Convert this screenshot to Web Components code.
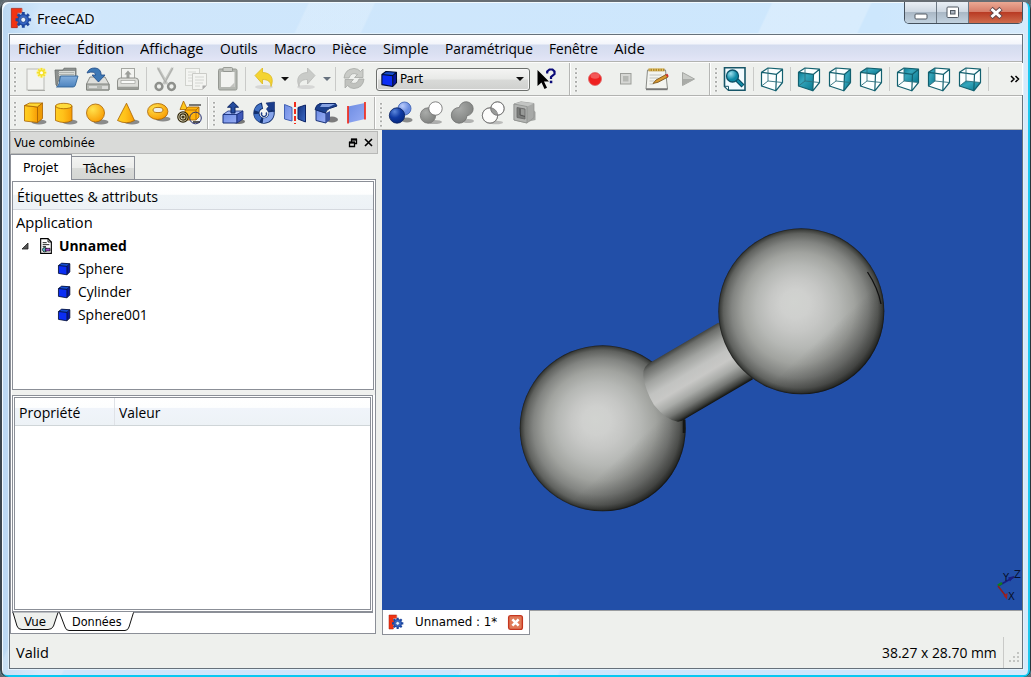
<!DOCTYPE html>
<html lang="fr"><head><meta charset="utf-8"><title>FreeCAD</title>
<style>
html,body{margin:0;padding:0;width:1031px;height:677px;overflow:hidden;background:#5d6a70}
body{font-family:"Open Sans","Noto Sans",sans-serif;font-size:14.5px;color:#000}
</style></head><body>
<cad-window></cad-window>
<script>
const base='<style>*{box-sizing:border-box}:host{box-sizing:border-box}svg{display:block;overflow:visible}</style>';
function define(name,html,after){
  const t=document.createElement('template');t.innerHTML=base+html;
  customElements.define(name,class extends HTMLElement{
    connectedCallback(){
      if(this.shadowRoot)return;
      this.attachShadow({mode:'open'}).append(t.content.cloneNode(true));
      if(after)after(this,this.shadowRoot);
    }
  });
}

/* Text set to a known advance width */
define('fit-text','<style>:host{display:block;white-space:pre;line-height:20px;flex:none}span{display:inline-block;transform-origin:0 50%}</style><span><slot></slot></span>',(h,r)=>{
  const s=r.querySelector('span'),w=+h.getAttribute('w');
  h.style.width=w+'px';
  const m=s.offsetWidth;
  if(m)s.style.transform='scaleX('+(w/m).toFixed(4)+')';
});

const O='stroke="#a86200" stroke-width=".8" stroke-linejoin="round"';
const shadow='<ellipse cx="17" cy="21" rx="7.5" ry="2.6" fill="#555" opacity=".65"/>';
const cubeLines='<path d="M1.5 5.300 8 1 22.500 2.200 16.500 7.300zM1.500 5.300V19L15.800 23.800 16.500 7.300M15.800 23.800 22.500 15.500V2.200" fill="none" stroke="#12606f" stroke-width="1.2" stroke-linejoin="round"/><path d="M8 1V14L1.500 19M8 14 22.500 15.500" fill="none" stroke="#2c6f7d" stroke-width=".9"/>';
const cube=p=>'<path d="M1.5 5.300 8 1 22.500 2.200V15.5L15.800 23.800 1.5 19z" fill="#fbffff"/>'+(p?'<path d="'+p+'" fill="url(#teal)"/>':'')+cubeLines;
const icons={
 'new':'<rect x="4" y="2" width="17" height="21" fill="#f2f3f0" stroke="#b9bab6"/><path d="M5 23.5h17" stroke="#8d8f8a" opacity=".6"/><circle cx="18.5" cy="5.7" r="5.2" fill="#fff59a" opacity=".7"/><path d="M18.500 1v9.400M13.800 5.700h9.400M15.200 2.400l6.600 6.600M21.800 2.400l-6.600 6.600" stroke="#f4e02c" stroke-width="1.700"/><circle cx="18.500" cy="5.700" r="3" fill="#f4e02c"/><circle cx="18.5" cy="5.7" r="1.5" fill="#fff"/>',
 open:'<path d="M1 3h8l1-1.8h12V14H4l-1 5-1-1z" fill="#8d918f" stroke="#666b68" stroke-width=".8"/><path d="M5 4h16v5H5z" fill="#d8dbd8"/><path d="M4 5.5h16M4 7.5h16" stroke="#a6aaa6" stroke-width=".8"/><path d="M6.5 9H24l-2.6 9q-.5 2-2.4 2H2.5q2-1 2.4-3z" fill="url(#fold)" stroke="#2f6396" stroke-width=".9"/>',
 save:'<path d="M5 10h15l4 7v6H1.5v-6z" fill="#dedfdb" stroke="#8b8d88"/><path d="M1.5 17H24v6H1.5z" fill="#b4b7b2" stroke="#80837e"/><path d="M4 20h8M18 19v3M20 19v3M22 19v3" stroke="#fff"/><path d="M2 6Q4 .8 10 1q6 .4 6.2 7H20l-6.5 7L7 8h3.8Q10 3.500 2 6z" fill="#3d78b5" stroke="#204a87" stroke-width=".8"/>',
 print:'<rect x="5.500" y="1.500" width="13" height="11" fill="#f3f4f1" stroke="#a5a7a2"/><path d="M12 3.500l3.500 4H13.500V11h-3V7.500H8.500z" fill="#9c9e9a"/><path d="M1.500 14q0-3 3-3h15q3 0 3 3v8.500h-21z" fill="#dcddd9" stroke="#8f918c"/><rect x="5" y="13.500" width="14" height="3" fill="#f9faf8" stroke="#a1a39e" stroke-width=".7"/><path d="M2 21h20" stroke="#9a9c97" stroke-width="2.500"/>',
 cut:'<path d="M5 1l9 16M19.500 1l-9 16" stroke="#c3c5c1" stroke-width="2.600"/><path d="M4.500.500l8 15M20 .500l-8 15" stroke="#a2a4a0" stroke-width=".7"/><circle cx="6" cy="19.500" r="3.400" fill="none" stroke="#8e908c" stroke-width="2.500"/><circle cx="18.500" cy="19.500" r="3.400" fill="none" stroke="#8e908c" stroke-width="2.500"/>',
 copy:'<rect x="1.500" y="1.500" width="14" height="17" fill="#f4f5f2" stroke="#d0d2cd"/><path d="M4 5h8M4 8h8M4 11h4M4 14h4" stroke="#d6d8d4"/><path d="M8.500 6.500h14v12l-4 4h-10z" fill="#f3f4f1" stroke="#cacbc7"/><path d="M11 10h9M11 13h9M11 16h8M11 19h5" stroke="#d4d6d2"/><path d="M18.500 22.500v-4h4z" fill="#aaa"/>',
 paste:'<rect x="3.500" y="2" width="18.500" height="21" rx="1.500" fill="#b4b7b1" stroke="#959892"/><path d="M6 5h13.500v15H6z" fill="#f2f3f0"/><path d="M15 20l4.500-4.500V20z" fill="#c2c3bf"/><rect x="8" y=".5" width="9.500" height="4" rx="1" fill="#c9cbc6" stroke="#888b85" stroke-width=".8"/>',
 undo:'<ellipse cx="12" cy="20" rx="9" ry="2" fill="#ccc" opacity=".7"/><path d="M3 8.500 10.500 1v4.500c8 .2 12 5.500 8.500 14-.3-5-3-7-8.500-7V17z" fill="#f4d431" stroke="#dcb81c" stroke-width=".8"/>',
 redo:'<ellipse cx="12" cy="20" rx="9" ry="2" fill="#ccc" opacity=".7"/><path d="M21 8.500 13.500 1v4.500c-8 .2-12 5.500-8.500 14 .3-5 3-7 8.500-7V17z" fill="#c9cbc8" stroke="#b7b9b6" stroke-width=".8"/>',
 refresh:'<path d="M2 11Q3 2 12 1.500q4 0 6.500 3L21 2v8.500h-8.500l3-3Q9 4.500 7 11z" fill="#c9cbc7" stroke="#a6a8a4" stroke-width=".8"/><path d="M22 12q-1 9-10 9.500-4 0-6.500-3L3 21v-8.500h8.500l-3 3Q15 18.500 17 12z" fill="#c0c2be" stroke="#a6a8a4" stroke-width=".8"/>',
 what:'<path d="M3.500 3v16l4-3.500 3 6.500 2.500-1.200-3-6.300h5z" fill="#000"/><path d="M13.200 6.500V4.500L15.500 2.500h3l2 2V7L17 10v2" fill="none" stroke="#0a0a78" stroke-width="2.200"/><rect x="15.800" y="13.700" width="2.500" height="2.500" fill="#0a0a78"/>',
 record:'<circle cx="12" cy="12" r="6.500" fill="#ef2020" stroke="#dd6a6a" stroke-width=".8"/><ellipse cx="12" cy="9" rx="4.500" ry="2.800" fill="#fff" opacity=".25"/>',
 stop:'<rect x="6.500" y="6.500" width="10.500" height="10.500" fill="#d6d7d4" stroke="#9c9e9a"/><rect x="9" y="9" width="5.500" height="5.500" fill="#b5b7b3"/>',
 edit:'<path d="M2.500 3h18L22.500 22H1z" fill="#f3f4f0" stroke="#8b8d88"/><path d="M1 22.300h21.500" stroke="#777" stroke-width="1.800"/><path d="M3.500 1.500h16v2.800h-16z" fill="#b48a28"/><path d="M5 1v3M7.500 1v3M10 1v3M12.500 1v3M15 1v3M17.500 1v3" stroke="#ead080" stroke-width=".8"/><path d="M4.500 8h12M4.500 11h9M4.500 14h5M4.500 17h4" stroke="#c2c4c0"/><path d="M8 16.500l3-3.500L21 7.500l2 2.500-10 5.300z" fill="#d89830" stroke="#6d4a12" stroke-width=".8"/><path d="M20.500 7.800l2 2.500 1.200-1-1.200-2.500z" fill="#d03030"/>',
 play:'<path d="M6.500 5.500 18.500 12 6.500 18.500z" fill="#c9cbc7" stroke="#a5a7a3"/><path d="M7 12h11L7 18z" fill="#a9aba7"/>',
 fit:'<path d="M1.500.800H22v22.500H5.500l-4-4z" fill="#f2fbff" stroke="#175668" stroke-width="1.600"/><path d="M1.500 19.300h4v4z" fill="#fff" stroke="#175668"/><path d="M14 13l6 6" stroke="#064c62" stroke-width="4.200"/><path d="M14 13l5.500 5.500" stroke="#128da8" stroke-width="2"/><circle cx="9.500" cy="9" r="6" fill="url(#lens)" stroke="#0b5268" stroke-width="1.300"/>',
 axo:cube(''),front:cube('M1.500 5.300 16.500 7.300 15.800 23.800 1.500 19z'),right:cube('M16.500 7.300 22.500 2.200V15.500L15.800 23.800z'),top:cube('M1.500 5.300 8 1 22.500 2.200 16.500 7.300z'),
 rear:cube('M8 1 22.500 2.200V15.500L8 14z'),left:cube('M1.500 5.300 8 1V14L1.500 19z'),bottom:cube('M1.500 19 8 14 22.500 15.500 15.800 23.800z'),
 box:shadow+'<path d="M2.500 4.500 15.500 6V21.500L2.500 20z" fill="url(#gold)" '+O+'/><path d="M2.500 4.500 7.500 2H20.500L15.500 6z" fill="#ffd733" '+O+'/><path d="M15.500 6 20.500 2V17.500L15.500 21.500z" fill="#ee9b05" '+O+'/>',
 cylinder:shadow+'<path d="M2.500 5v14.500q9 4 16.500 0V5z" fill="url(#gold)" '+O+'/><ellipse cx="10.750" cy="5" rx="8.250" ry="2.700" fill="#ffdc3c" '+O+'/>',
 sphere:shadow+'<circle cx="11.500" cy="12" r="9" fill="url(#goldr)" '+O+'/>',
 cone:shadow+'<path d="M11.500 2.200 2.500 19.500q9 4.500 17 0z" fill="url(#gold)" '+O+'/>',
 torus:shadow.replace('cy="21"','cy="18"')+'<path fill-rule="evenodd" d="M1.500 10.500a10.200 8 0 1 0 20.400 0a10.200 8 0 1 0-20.400 0zM7 9a5 2.600 0 1 1 10 0a5 2.600 0 1 1-10 0z" fill="url(#goldr)" '+O+'/>',
 prims:'<path d="M6.500 0 3 8.500h7.500z" fill="#ffc71a" '+O+'/><path d="M8 9l3-3h11v10l-3 3H8z" fill="#ffb40c" '+O+'/><path d="M8 9h11v10M19 9l3-3" fill="none" '+O+'/><path d="M12 4h12" stroke="#000"/><g fill="none" stroke="#2d2408" stroke-width="1.200"><circle cx="6" cy="16" r="5.200" fill="#eadfb8aa"/><circle cx="6" cy="16" r="3.100"/><circle cx="6" cy="16" r="1"/></g><path d="M16 21h7" stroke="#555" stroke-width="2"/><circle cx="18.500" cy="17" r="5.800" fill="none" stroke="#29306f" stroke-width="1"/>',
 extrude:'<ellipse cx="18" cy="20.500" rx="6" ry="2.500" fill="#444" opacity=".7"/><path d="M2 13.500h14v8.500H2z" fill="url(#blue)" stroke="#152c78"/><path d="M2 13.500 7 10h15l-6 3.500z" fill="#9fb4f4" stroke="#152c78" stroke-width=".8"/><path d="M16 13.500l6-3.500v8l-6 4z" fill="#3f58b8" stroke="#152c78" stroke-width=".8"/><path d="M12 .8 17.500 6.200H14V12h-4V6.200H6.500z" fill="#244b9d" stroke="#0d2562"/>',
 revolve:'<path d="M10.500 4.600A7.600 7.600 0 1 0 19 9" fill="none" stroke="#12306f" stroke-width="6.200"/><path d="M9.500 4.900A7.600 7.600 0 0 0 4.500 10M4.300 13A7.600 7.600 0 0 0 8.500 18.900" fill="none" stroke="#3f6fc4" stroke-width="4.600"/><path d="M11 19.600A7.600 7.600 0 0 0 19.400 11" fill="none" stroke="#86a4ea" stroke-width="4.600"/><path d="M14 2 22.500 1V10.500L19.500 9 16 11 14.500 8 16.500 5.500z" fill="#1a3c8b" stroke="#0f2968" stroke-width=".6"/><circle cx="12" cy="12.500" r="4" fill="#f3f5f3"/><path d="M10 11.500a2.500 2.500 0 1 0 4 0" fill="none" stroke="#1d3d86" stroke-width="1.300"/>',
 mirror:'<path d="M1.500 3.500 9 6.500V20L1.500 18z" fill="url(#blue)" stroke="#4161b3"/><path d="M15 6.500 22.500 4V21L15 18z" fill="url(#dblue)" stroke="#0c2467"/><path d="M12 1v22" stroke="#f12c1c" stroke-width="2" stroke-dasharray="5 2"/>',
 fillet:'<ellipse cx="18" cy="18.500" rx="6" ry="3" fill="#555" opacity=".75"/><path d="M2 9v10.500L12 22V12z" fill="url(#blue)" stroke="#183379"/><path d="M12 12v10l4-3v-9z" fill="#38509e"/><path d="M1 8.500Q2 3.500 6 2.500H21.500L23 5 15.500 7.500Q12 9 11.500 12z" fill="#1b408d" stroke="#10296a"/><path d="M8 3h13l-6 3H6z" fill="#86a3e3"/>',
 ruled:'<path d="M3 5.500 20 2V18L3 22z" fill="url(#blue)"/><path d="M3 5v17.500M20 1v17.500" stroke="#f12c1c" stroke-width="1.700"/>',
 bool:'<ellipse cx="19" cy="19" rx="5.500" ry="2.500" fill="#555" opacity=".65"/><circle cx="16.500" cy="7.500" r="6.500" fill="url(#lb)" stroke="#345ab0" stroke-width=".8"/><circle cx="9" cy="14.500" r="7.700" fill="url(#db)" stroke="#07205e" stroke-width=".8"/>',
 diff:'<ellipse cx="15" cy="21" rx="8" ry="2" fill="#888" opacity=".65"/><circle cx="9" cy="14.500" r="7.700" fill="url(#gr)" stroke="#777" stroke-width=".8"/><circle cx="16.500" cy="7.500" r="6.700" fill="#fff" stroke="#666" stroke-width=".8"/>',
 union:'<ellipse cx="18" cy="20" rx="6" ry="2" fill="#888" opacity=".6"/><path d="M1.300 14a7.700 7.700 0 0 1 8-7.500A7 7 0 1 1 17 14.700 7.800 7.800 0 1 1 1.300 14z" fill="url(#gr)" stroke="#6e706e" stroke-width=".8"/>',
 common:'<ellipse cx="15" cy="21.500" rx="7" ry="1.700" fill="#999" opacity=".6"/><circle cx="9" cy="14.500" r="7.700" fill="#fcfcfb" stroke="#777" stroke-width=".8"/><circle cx="16.500" cy="7.500" r="6.700" fill="#fff" stroke="#777" stroke-width=".8"/><path d="M9 6.800a7.700 7.700 0 0 1 7.600 7.400A6.700 6.700 0 0 1 9.800 7z" fill="#999b99"/><g fill="none" stroke="#777" stroke-width=".8"><circle cx="9" cy="14.500" r="7.700"/><circle cx="16.500" cy="7.500" r="6.700"/></g>',
 section:'<path d="M15 21l8.500-2v-8l-5-5z" fill="#858785" opacity=".7"/><path d="M2 3 9 .800 22 2.500v14L15 22 2 19z" fill="#a7a9a7" stroke="#8f918f" stroke-width=".7"/><path d="M2 3 15 5.500 22 2.500 9 .800z" fill="#c3c5c3"/><path d="M2 3 15 5.500V22L2 19z" fill="#b2b4b2" stroke="#8a8c8a" stroke-width=".7"/><path d="M5 6.500l8 1.500v10L5 16.500z" fill="#7b7d7b" stroke="#666" stroke-width=".8"/><path d="M8 7.500V14l5 1.500" fill="none" stroke="#555"/><path d="M9 8l3.500.500v6L9 13.500z" fill="#979997"/>',
 part:'<path d="M2.500 6 8 2 22 3 17 7.500V22L2.500 19.500z" fill="#0b2ef5"/><path d="M2.500 6 8 2 22 3 17 7.500z" fill="#174ed0"/><path d="M17 7.500 22 3V17L17 22z" fill="#0716a0"/><path d="M2.500 6 8 2 22 3 17 7.500zM2.500 6V19.500L17 22V7.500M17 22l5-5V3" fill="none" stroke="#000c30" stroke-width="1.400" stroke-linejoin="round"/>',
 logo:'<path d="M1.500 1.500H13V6.500H8V10h5v4H8v8.500H1.500z" fill="#f23312" stroke="#a91e10" stroke-width=".8"/><path d="M13 1.500v5H8" fill="none" stroke="#ffb29b" stroke-width=".5"/><g transform="translate(14.500 14)"><circle r="6" fill="#2c58b4" stroke="#12316f" stroke-width=".7"/><path d="M0-8.500V8.500M-8.500 0H8.500M-6-6 6 6M6-6-6 6" stroke="#1c469f" stroke-width="3.200"/><circle r="5" fill="#3766c4"/><circle r="2.700" fill="#e8f2fb" stroke="#15367b" stroke-width=".7"/></g>',
 doc:'<path d="M4 1h11l5 5v17H4z" fill="#fff" stroke="#000" stroke-width="1.700"/><path d="M15 1v5h5M7 7h6M7 10h10M7 13h5" fill="none" stroke="#000" stroke-width="1.300"/><circle cx="10" cy="17.500" r="3.300" fill="#55b8c4" stroke="#000"/><path d="M11 15.500h7v4h-7z" fill="#a94bd0" stroke="#000"/>',
 closetab:'<rect x="1" y="1" width="22" height="22" rx="3" fill="#e07a58" stroke="#c5361f" stroke-width="2.200"/><path d="M7 7l10 10M17 7 7 17" stroke="#fff" stroke-width="4.200"/>'
};
const defs='<defs><linearGradient id="teal" x2="1" y2="1"><stop stop-color="#0b7d96"/><stop offset=".35" stop-color="#35a5bb"/><stop offset="1" stop-color="#07788f"/></linearGradient><linearGradient id="fold" x2="0" y2="1"><stop stop-color="#85b0de"/><stop offset="1" stop-color="#4c83be"/></linearGradient><radialGradient id="lens" cx=".35" cy=".3"><stop stop-color="#9be0ee"/><stop offset="1" stop-color="#0d89a5"/></radialGradient><linearGradient id="gold"><stop stop-color="#ffcf22"/><stop offset=".45" stop-color="#ffc21a"/><stop offset="1" stop-color="#f79c04"/></linearGradient><radialGradient id="goldr" cx=".35" cy=".3" r=".75"><stop stop-color="#ffe24d"/><stop offset="1" stop-color="#f89c03"/></radialGradient><linearGradient id="blue" x2="1" y2="1"><stop stop-color="#6d8ce2"/><stop offset="1" stop-color="#98adf5"/></linearGradient><linearGradient id="dblue" x2="1" y2="1"><stop stop-color="#12327e"/><stop offset="1" stop-color="#3d6bc6"/></linearGradient><radialGradient id="lb" cx=".35" cy=".3"><stop stop-color="#b9cbfb"/><stop offset="1" stop-color="#6a8ce0"/></radialGradient><radialGradient id="db" cx=".35" cy=".25" r=".8"><stop stop-color="#5b87dc"/><stop offset=".5" stop-color="#103ba4"/><stop offset="1" stop-color="#06277c"/></radialGradient><radialGradient id="gr" cx=".35" cy=".3" r=".8"><stop stop-color="#a9aba9"/><stop offset="1" stop-color="#7b7d7b"/></radialGradient></defs>';
define('cad-icon','<style>:host{display:block;flex:none}</style><svg viewBox="0 0 24 24"></svg>',(h,r)=>{
  const v=r.querySelector('svg'),s=h.getAttribute('size')||24;
  v.setAttribute('width',s);v.setAttribute('height',s);v.innerHTML=defs+icons[h.getAttribute('name')];
});
define('tool-button','<style>:host{display:flex;width:31px;height:32px;align-items:center;justify-content:center;flex:none}</style><cad-icon></cad-icon>',(h,r)=>{
  const n=document.createElement('cad-icon');n.setAttribute('name',h.getAttribute('icon'));r.querySelector('cad-icon').replaceWith(n);
});
define('tool-sep','<style>:host{display:block;flex:none;width:6px;height:24px;background:linear-gradient(#c9cac8,#c9cac8) 3px 0/1px 100% no-repeat}</style>');
define('tool-grip','<style>:host{display:block;flex:none;width:8px;height:26px;background:radial-gradient(circle at 2px 2px,#aaaca9 1.1px,#fff 1.2px,transparent 1.9px) 3px 1px/5px 4.4px repeat-y}</style>');
define('tool-arrow','<style>:host{display:flex;flex:none;width:11px;justify-content:center}i{border:4px solid transparent;border-top-color:var(--c,#111);border-bottom:0}</style><i></i>');
define('tool-group','<style>:host{display:flex;align-items:center;height:100%;flex:none;border-right:1px solid #b5b6b4;box-shadow:1px 0 #fff;overflow:hidden}</style><slot></slot>');
define('tool-row','<style>:host{display:flex;height:34px;background:#eef0ed;border-bottom:1px solid #b2b3b1;border-top:1px solid #fcfcfb;flex:none}</style><slot></slot>');
define('work-combo','<style>:host{display:flex;align-items:center;width:154px;height:23px;margin-left:7px;border:1.500px solid #6d706d;border-radius:3px;background:linear-gradient(#f4f4f3,#e8e9e7 48%,#d9dad8 52%,#cfd0ce);box-shadow:inset 0 0 0 1px #f7f7f7;padding:0 4px 0 3px;font:12.5px "DejaVu Sans Condensed","DejaVu Sans",sans-serif}fit-text{margin-left:2px;flex:none}tool-arrow{margin-left:auto}</style><cad-icon name="part" size="18"></cad-icon><fit-text w="23">Part</fit-text><tool-arrow></tool-arrow>');

define('title-bar',`<style>
:host{display:flex;height:34px;align-items:flex-start;flex:none}
cad-icon{margin:7px 0 0 1px}
fit-text{margin:9px 0 0 5px;text-shadow:0 0 8px #fff,0 0 12px #fff}
.b{display:flex;margin-left:auto;height:22px;margin-top:2px;border:1px solid #45515d;border-top:0;border-radius:0 0 5px 5px;overflow:hidden;width:119px}
.b i{display:flex;align-items:center;justify-content:center;width:32px;border-right:1px solid #6c7884;background:linear-gradient(#e9eff5,#cdd7e1 48%,#aab8c6 50%,#c2d2df)}
.b i:last-child{flex:1;border:0;background:linear-gradient(#eba994,#d57b67 48%,#b93b24 50%,#cf6c4d)}
.b i:first-child{padding-top:3px}
</style><cad-icon name="logo" size="22"></cad-icon><fit-text w="58">FreeCAD</fit-text>
<div class="b"><i><svg width="14" height="12"><rect x="1" y="6" width="12" height="5" rx="1" fill="#fff" stroke="#505863"/></svg></i><i><svg width="14" height="13"><rect x="1" y="1" width="11.500" height="10.500" rx="1" fill="#fff" stroke="#505863"/><rect x="4.500" y="4.500" width="4.500" height="3.500" fill="#aab4c0" stroke="#505863"/></svg></i><i><svg width="14" height="12"><path d="M2 1.500 12 10.500M12 1.500 2 10.500" stroke="#63474a" stroke-width="4.800"/><path d="M2.500 2 11.500 10M11.500 2 2.500 10" stroke="#fff" stroke-width="3"/></svg></i></div>`);

define('menu-bar',`<style>:host{display:flex;gap:16px;height:27px;padding:4px 0 0 8px;flex:none;background:linear-gradient(#fff,#f3f5fb 9px,#d4dcef 10px,#dbe0f2 19px,#e2e5f6 25px);border-bottom:1px solid #b2b3b1}</style>
<fit-text w="43">Fichier</fit-text><fit-text w="47">Édition</fit-text><fit-text w="64">Affichage</fit-text><fit-text w="38">Outils</fit-text><fit-text w="42">Macro</fit-text><fit-text w="35">Pièce</fit-text><fit-text w="46">Simple</fit-text><fit-text w="88">Paramétrique</fit-text><fit-text w="49">Fenêtre</fit-text><fit-text w="31">Aide</fit-text>`);

const btn=a=>a.split(' ').map(n=>n==='|'?'<tool-sep></tool-sep>':'<tool-button icon="'+n+'"></tool-button>').join('');
define('main-tools',`<style>:host{display:block}.more{margin:0 0 0 auto;width:10px}svg{margin:0}.g3{flex:1;border-right:0;padding-right:2px}</style>
<tool-row><tool-grip style="width:9px;margin-top:3px"></tool-grip><tool-group style="width:551px">${btn('new open save print | cut copy paste | undo')}<tool-arrow></tool-arrow><tool-button icon="redo"></tool-button><tool-arrow style="--c:#66717e"></tool-arrow>${btn('| refresh')}<work-combo></work-combo>${btn('what')}</tool-group>
<tool-group style="width:140px;padding-left:1px"><tool-grip></tool-grip>${btn('record stop edit play')}</tool-group>
<tool-group class="g3" style="padding-left:1px"><tool-grip></tool-grip>${btn('fit | axo | front right top | rear left bottom |')}<svg class="more" width="10" height="9" viewBox="0 0 10 9"><path d="M1 1l3 3-3 3M5.500 1l3 3-3 3" fill="none" stroke="#000" stroke-width="1.500"/></svg></tool-group></tool-row>
<tool-row><tool-group style="width:198px"><tool-grip></tool-grip>${btn('box cylinder sphere cone torus prims')}</tool-group><tool-group style="width:167px"><tool-grip style="margin-left:1px"></tool-grip>${btn('extrude revolve mirror fillet ruled')}</tool-group><tool-grip style="margin:4px 0 0 1px"></tool-grip>${btn('bool diff union common section')}</tool-row>`);

define('tree-row',`<style>:host{display:flex;height:23px;align-items:center}</style><slot></slot>`);
define('tree-view',`<style>
:host{display:block;height:209px;border:1px solid #8b8f97;background:#fff;flex:none;margin:0 1px 0 1px}
.h{height:28px;background:linear-gradient(#fff,#fdfefe 45%,#eff4f7 50%,#edf2f6);border-bottom:1px solid #d5d9df;padding:5px 0 0 4px}
.l{padding:1px 0 0 3px}.d{padding-left:41px}.d cad-icon{margin-right:7px}.n{padding-left:5px}.n svg{margin-right:9px}
</style><div class="h"><fit-text w="141">Étiquettes &amp; attributs</fit-text></div>
<div class="l"><tree-row><fit-text w="77">Application</fit-text></tree-row>
<tree-row class="n"><svg width="8" height="8"><path d="M1 7H7V1z" fill="#555" stroke="#222" stroke-width=".8"/></svg><cad-icon name="doc" size="16" style="margin-right:5px"></cad-icon><fit-text w="68" style="font-weight:700">Unnamed</fit-text></tree-row>
<tree-row class="d"><cad-icon name="part" size="14"></cad-icon><fit-text w="46">Sphere</fit-text></tree-row>
<tree-row class="d"><cad-icon name="part" size="14"></cad-icon><fit-text w="54">Cylinder</fit-text></tree-row>
<tree-row class="d"><cad-icon name="part" size="14"></cad-icon><fit-text w="70">Sphere001</fit-text></tree-row></div>`);
define('property-view',`<style>
:host{display:block;height:222px;flex:none;margin:0 0 0 1px;padding:5px 2px 0 0;background:linear-gradient(#f0f1ef,#f0f1ef) 0 0/100% 5px no-repeat}
.out{height:217px;border:1px solid #8b8f97;padding:1px;background:#fff}
.in{height:100%;border:1px solid #8b8f97}
.h{display:flex;height:28px;background:linear-gradient(#fff,#fdfefe 35%,#f0f4fa 38%,#edf2f6);border-bottom:1px solid #cfd5d8;padding:5px 0 0 4px}
.v{border-left:1px solid #dfe2e7;margin:-5px 0 0 34px;padding:5px 0 0 4px}
</style><div class="out"><div class="in"><div class="h"><fit-text w="61">Propriété</fit-text><div class="v"><fit-text w="41">Valeur</fit-text></div></div></div></div>`);
define('combo-dock',`<style>
:host{display:flex;flex-direction:column;width:368px;padding-top:1px;flex:none;font-family:"Open Sans",sans-serif}
.t{display:flex;align-items:center;height:23px;background:#d9dad8;border:1px solid #b8b9b7;padding:0 4px 0 3px;flex:none}
.t svg:first-of-type{margin-left:auto;margin-right:6px}
.ui{font:12.5px "DejaVu Sans Condensed","DejaVu Sans",sans-serif}
.tabs{display:flex;height:25px;align-items:flex-end;flex:none}
.a,.b{border:1px solid #8b8f97;border-bottom:0}
.a{width:62px;background:#fff;padding:3px 0 0 12px;margin-bottom:-1px;height:26px;position:relative}
.b{height:23px;width:63px;border-left:0;background:linear-gradient(#f3f4f2,#ebecea 50%,#dadcd9 52%,#d4d6d3);padding:2px 0 0 11px}
.p{height:455px;width:366px;border:1px solid #8b8f97;background:#fff;padding:1px 0 0 0;display:flex;flex-direction:column}
.f{position:relative;height:20px;width:361px;border-top:1px solid #8b8f97;margin:0 1px}
.f svg{position:absolute;left:0;top:-1px}
.ft{display:flex;padding-left:12px;gap:26px;position:relative;margin-top:-1px}
</style>
<div class="t ui"><fit-text w="81">Vue combinée</fit-text><svg width="10" height="10"><path d="M3.500 4V1.500h5v4H6.500M1.500 4.500h5v4h-5z" fill="none" stroke="#000" stroke-width="1.300"/><path d="M3 1.500h6M1 4.500h6" stroke="#000" stroke-width="1.800"/></svg><svg width="9" height="9"><path d="M1 1l7 7M8 1 1 8" stroke="#000" stroke-width="1.600"/></svg></div>
<div class="tabs ui"><div class="a"><fit-text w="35">Projet</fit-text></div><div class="b"><fit-text w="42">Tâches</fit-text></div></div>
<div class="p"><tree-view></tree-view><property-view></property-view>
<div class="f ui"><svg width="130" height="21"><path d="M1 .500 5 14q1 3.500 5 3.500h26q4 0 5.500-3.500L46 .500" fill="#eef0ed" stroke="#111"/><path d="M47.500.500 53 15q1 3.500 4 3.500h56q3 0 4-3.500L121.500.500" fill="#fff" stroke="#111"/><path d="M48 .500H121" stroke="#fff"/></svg><div class="ft"><fit-text w="22">Vue</fit-text><fit-text w="50">Données</fit-text></div></div></div>`);

define('model-view',`<style>:host{display:block;height:480px;background:#224fa8;flex:none;overflow:hidden}text{font:10px "DejaVu Sans",sans-serif;fill:#08102a}</style>
<svg width="640" height="480" viewBox="0 0 640 480"><defs>
<radialGradient id="s" cx=".5" cy=".5" r=".5" fx=".455" fy=".445"><stop stop-color="#d1d3d0"/><stop offset=".17" stop-color="#cfd0ce"/><stop offset=".32" stop-color="#c6c7c5"/><stop offset=".5" stop-color="#b6b8b5"/><stop offset=".67" stop-color="#a1a39f"/><stop offset=".82" stop-color="#828481"/><stop offset=".93" stop-color="#5f615e"/><stop offset=".98" stop-color="#3c3e3b"/><stop offset="1" stop-color="#191a18"/></radialGradient>
<linearGradient id="sh" x1=".25" y1=".2" x2=".86" y2=".86"><stop offset=".65" stop-color="#000" stop-opacity="0"/><stop offset="1" stop-color="#000" stop-opacity=".36"/></linearGradient>
<linearGradient id="c" gradientUnits="userSpaceOnUse" x1="269.700" y1="231.700" x2="303.200" y2="288.500"><stop stop-color="#3e403d"/><stop offset=".07" stop-color="#6b6d6a"/><stop offset=".25" stop-color="#a1a3a0"/><stop offset=".43" stop-color="#c2c3c1"/><stop offset=".57" stop-color="#c8c8c6"/><stop offset=".72" stop-color="#a9aba8"/><stop offset=".86" stop-color="#747673"/><stop offset=".96" stop-color="#393b38"/><stop offset="1" stop-color="#161715"/></linearGradient></defs>
<circle cx="220.700" cy="298.300" r="83" fill="url(#s)"/><circle cx="220.700" cy="298.300" r="83" fill="url(#sh)"/>
<path d="M302 290V303" stroke="#161715" stroke-width="2.500"/>
<path d="M269.700 231.700Q260 236 261.300 246 263 260 272 275 284 290 296 291.700L300 290.700 371 249.300 350 200 336.300 192.700z" fill="url(#c)"/>
<circle cx="419.300" cy="181.300" r="83" fill="url(#s)"/><circle cx="419.300" cy="181.300" r="83" fill="url(#sh)"/>
<path d="M485.500 142Q496 158 499 174" fill="none" stroke="#111" stroke-width="1.300"/>
<path d="M616 456 632 447" stroke="#1a1e80" stroke-width="1.600"/><path d="M626 447.500 632.500 446 628 451.500z" fill="#1a1e80"/><path d="M616 455.500 620 453" stroke="#108018" stroke-width="2.500"/><path d="M616 456 624.500 467" stroke="#8b2020" stroke-width="1.600"/><path d="M621.500 465.500 625 469.500 625.500 463z" fill="#a02020"/>
<text x="621" y="451">Y</text><text x="632" y="448">Z</text><text x="626" y="470">X</text></svg>`);
define('doc-tab',`<style>:host{display:flex;width:148px;height:25px;margin-top:-1px;border:1px solid #8b8f97;border-top:0;background:#fff;align-items:center;padding-left:5px;font:12.5px "DejaVu Sans Condensed","DejaVu Sans",sans-serif}fit-text{margin:0 11px}</style><cad-icon name="logo" size="16"></cad-icon><fit-text w="82">Unnamed : 1*</fit-text><cad-icon name="closetab" size="15"></cad-icon>`);
define('status-bar',`<style>:host{display:flex;height:33px;padding:9px 2px 0 6px;flex:none}.m{margin-left:auto}.s{width:1px;height:31px;background:#c9cac8;margin:-6px 0 0 6px;flex:none}svg{margin:9px 0 0 5px}</style><fit-text w="33">Valid</fit-text><fit-text class="m" w="115">38.27 x 28.70 mm</fit-text><div class="s"></div><svg width="11" height="11" fill="#c3c5c2"><path d="M8 0h2v2H8zM4 4h2v2H4zM8 4h2v2H8zM0 8h2v2H0zM4 8h2v2H4zM8 8h2v2H8z"/></svg>`);
define('cad-window',`<style>
:host{display:flex;flex-direction:column;width:1031px;height:677px;padding:0 8px 8px 9px;border-radius:8px 8px 7px 7px;
background:linear-gradient(115deg,transparent 0 280px,#ffffff30 282px 340px,transparent 342px 700px,#ffffff38 702px 790px,transparent 792px),linear-gradient(90deg,#b9d7f1,#cfe6fb 4%,#cde7fd 85%,#d6eafb);
box-shadow:inset 0 2px #666d73,inset 2px 0 #3c464c,inset -1px 0 #26363d,inset 0 -2px #08c8f2,inset -3px 0 #1ec9ef,inset 3px 3px #f2faff}
.c{display:flex;flex-direction:column;height:635px;border:1px solid #66717b;background:#eef0ed;flex:none;box-shadow:0 0 0 1px #e3f2fc}
.m{display:flex;height:504px;flex:none}.r{width:640px;margin-left:4px}
.line{border-top:1px solid #9a9da0;height:25px}
</style><title-bar></title-bar><div class="c"><menu-bar></menu-bar><main-tools></main-tools>
<div class="m"><combo-dock></combo-dock><div class="r"><model-view></model-view><div class="line"><doc-tab></doc-tab></div></div></div><status-bar></status-bar></div>`);
</script></body></html>
